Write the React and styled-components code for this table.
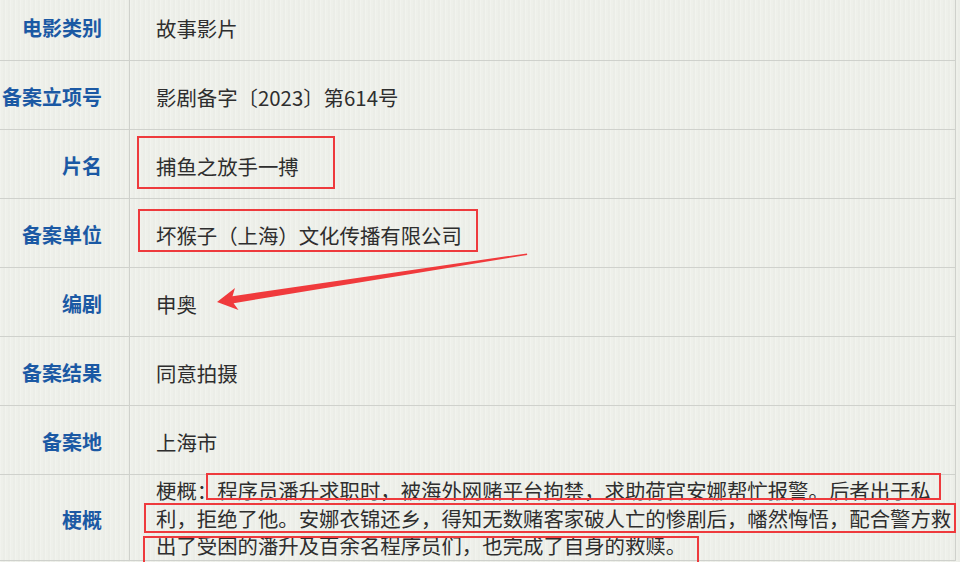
import React from 'react';
import styled, { createGlobalStyle } from 'styled-components';

const GlobalStyle = createGlobalStyle`
  html, body {
    margin: 0;
    padding: 0;
    background: #eef0ea;
  }
  body {
    font-family: "Noto Sans CJK SC", "Noto Sans", sans-serif;
  }
`;

const rows = [
  { label: '电影类别', value: '故事影片' },
  { label: '备案立项号', value: '影剧备字〔2023〕第614号' },
  { label: '片名', value: '捕鱼之放手一搏', mark: { top: -15.5, right: -36, bottom: -7.5, left: -19 } },
  { label: '备案单位', value: '坏猴子（上海）文化传播有限公司', mark: { top: -11.5, right: -16, bottom: -2, left: -18 } },
  { label: '编剧', value: '申奥' },
  { label: '备案结果', value: '同意拍摄' },
  { label: '备案地', value: '上海市' },
];

const App = () => {
  return (
    <>
      <GlobalStyle />
      <Page>
        <Table>
          {rows.map((r) => (
            <Row key={r.label}>
              <Label>{r.label}</Label>
              <Value>
                {r.mark ? <Mark $inset={r.mark}>{r.value}</Mark> : r.value}
              </Value>
            </Row>
          ))}
          <Row $tall>
            <Label>梗概</Label>
            <Summary>
              <Line>
                梗概：<Mark $inset={{ top: -2.5, right: -10, bottom: 5.5, left: -11 }}>程序员潘升求职时，被海外网赌平台拘禁，求助荷官安娜帮忙报警。后者出于私</Mark>
              </Line>
              <Line>
                <Mark $inset={{ top: 0, right: -5, bottom: 0, left: -12 }}>利，拒绝了他。安娜衣锦还乡，得知无数赌客家破人亡的惨剧后，幡然悔悟，配合警方救</Mark>
              </Line>
              <Line>
                <Mark $inset={{ top: 5.5, right: -13, bottom: -10, left: -13 }}>出了受困的潘升及百余名程序员们，也完成了自身的救赎。</Mark>
              </Line>
            </Summary>
          </Row>
        </Table>
        <Arrow viewBox="0 0 960 562" width="960" height="562">
          <polygon
            points="217,302 235,288 232.5,296.2 527,253.4 527.2,254.9 233.6,303.2 238.5,310"
            fill="#f03a3c"
          />
        </Arrow>
      </Page>
    </>
  );
};

const Page = styled.div`
  position: relative;
  width: 960px;
  height: 562px;
  overflow: hidden;
  background-color: #eef0ea;
  background-image: repeating-linear-gradient(
    90deg,
    rgba(255, 255, 255, 0.18) 0px,
    rgba(255, 255, 255, 0.18) 1px,
    transparent 1px,
    transparent 3px,
    rgba(0, 0, 0, 0.012) 3px,
    rgba(0, 0, 0, 0.012) 5px
  );
`;

const Table = styled.div`
  width: 955px;
  margin-top: -8px;
  border-right: 1px solid #cfd1cc;
  display: flex;
  flex-direction: column;
`;

const Row = styled.div`
  display: grid;
  grid-template-columns: 130px 1fr;
  height: ${(p) => (p.$tall ? '86px' : '69px')};
  box-sizing: border-box;
  border-bottom: 1px solid #cfd1cc;
`;

const Label = styled.div`
  display: flex;
  align-items: center;
  justify-content: flex-end;
  padding: 3px 27px 0 0;
  border-right: 1px solid #cfd1cc;
  color: #1b59a4;
  font-size: 20px;
  font-weight: 700;
  white-space: nowrap;
`;

const Value = styled.div`
  display: flex;
  align-items: center;
  padding: 4px 0 0 26px;
  color: #2e2e2e;
  font-size: 20.4px;
  white-space: nowrap;
`;

const Summary = styled.div`
  padding: 2px 0 0 26px;
  color: #2e2e2e;
  font-size: 20.4px;
  line-height: 27.5px;
`;

const Line = styled.div`
  white-space: nowrap;
`;

const Mark = styled.span`
  position: relative;
  &::after {
    content: '';
    position: absolute;
    top: ${(p) => p.$inset.top}px;
    right: ${(p) => p.$inset.right}px;
    bottom: ${(p) => p.$inset.bottom}px;
    left: ${(p) => p.$inset.left}px;
    border: 2.5px solid #ee3a3d;
    pointer-events: none;
  }
`;

const Arrow = styled.svg`
  position: absolute;
  top: 0;
  left: 0;
  pointer-events: none;
`;

export default App;
